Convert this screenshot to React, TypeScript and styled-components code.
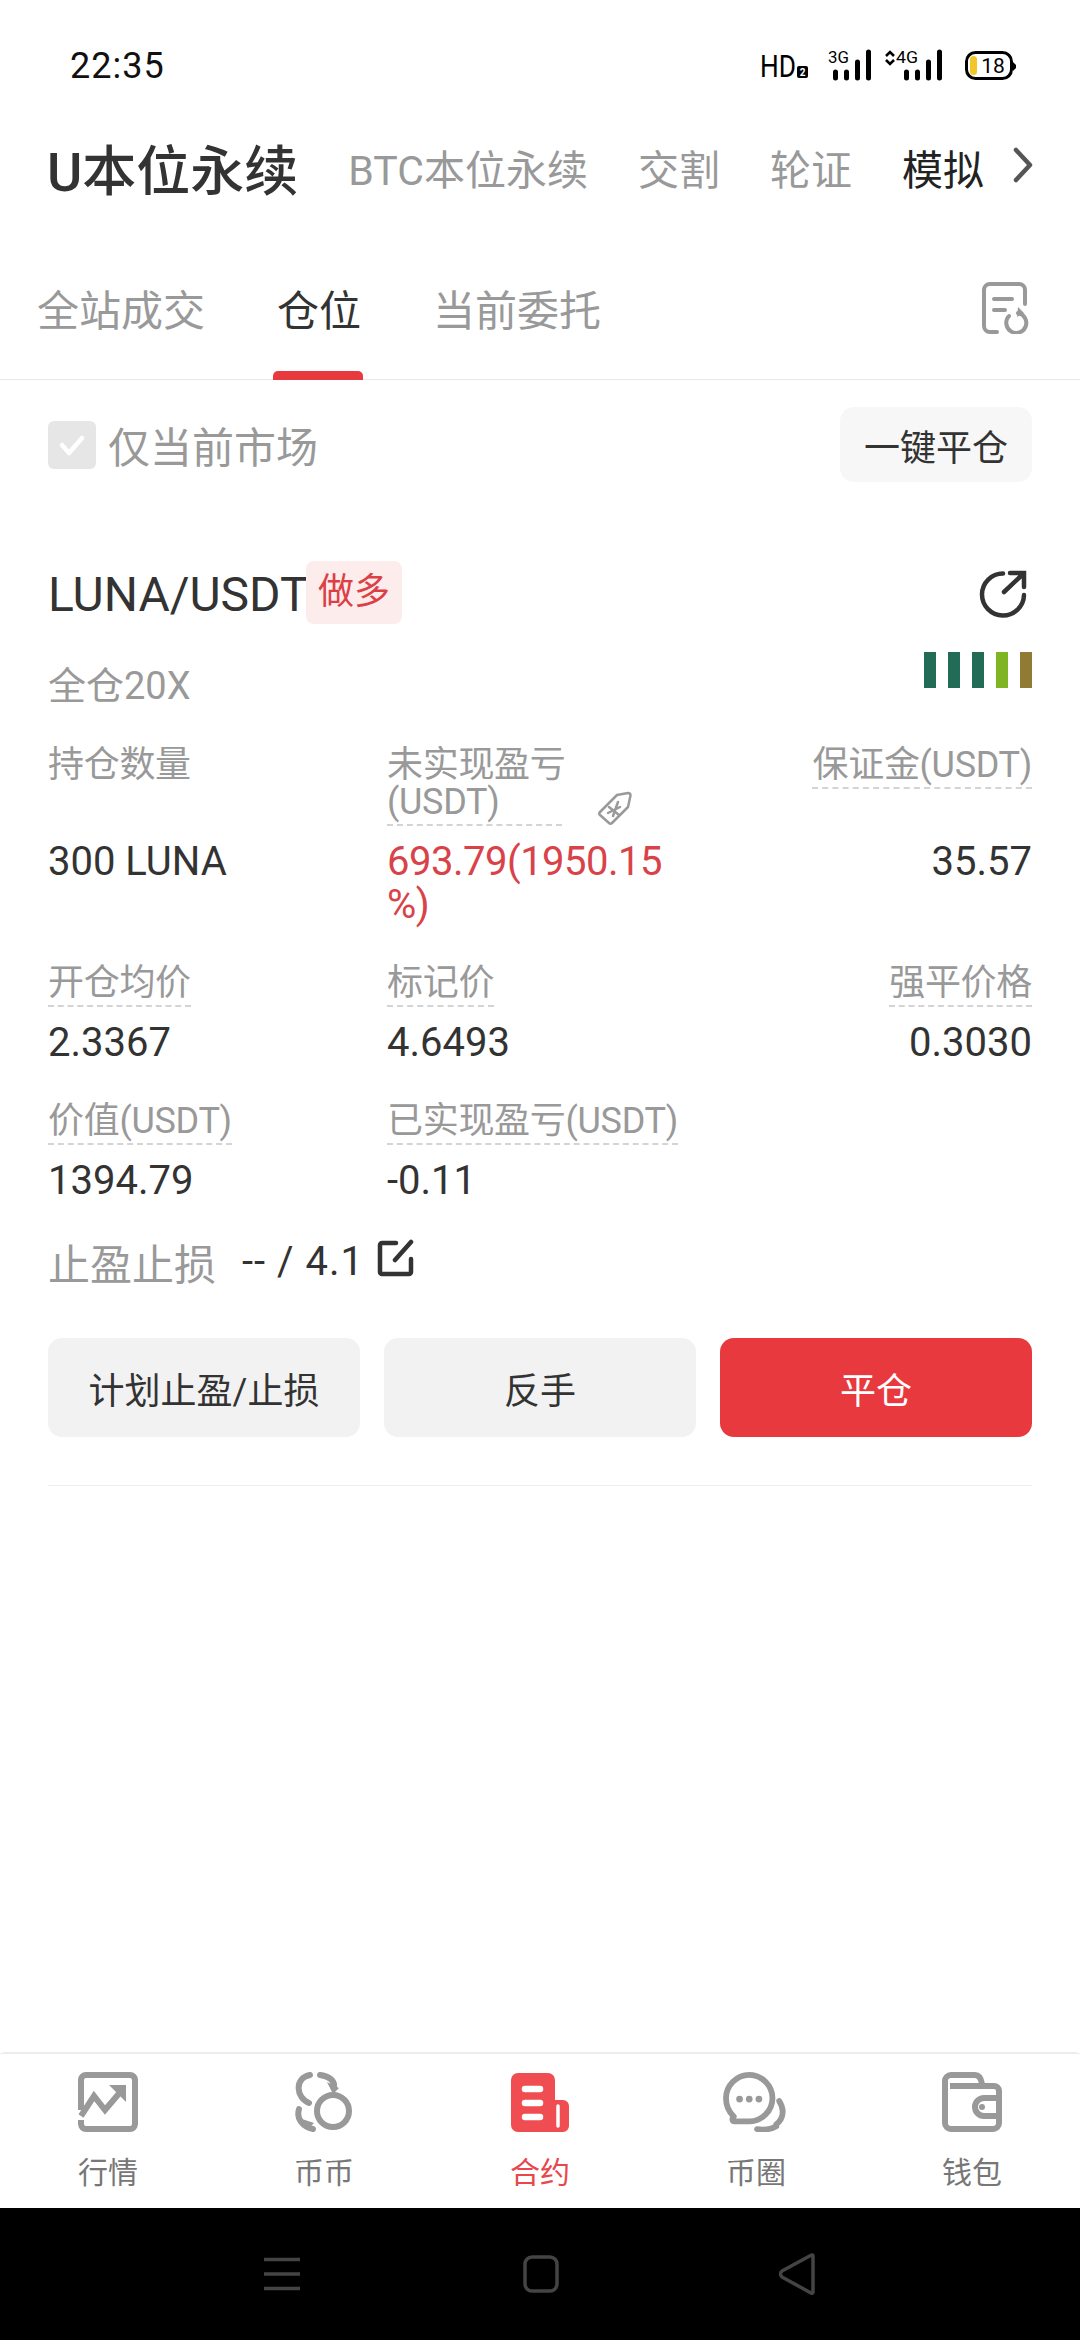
import { createGlobalStyle, styled } from 'styled-components';

const GRAY = '#999999';
const DARK = '#333333';
const RED = '#e8393f';

const TOP_TABS = [
  { label: 'BTC本位永续' },
  { label: '交割' },
  { label: '轮证' },
  { label: '模拟', dark: true }
];

const NAV_ITEMS = [
  { label: '行情', icon: <ChartIcon /> },
  { label: '币币', icon: <SwapIcon /> },
  { label: '合约', icon: <ContractIcon />, active: true },
  { label: '币圈', icon: <ChatIcon /> },
  { label: '钱包', icon: <WalletIcon /> }
];

export default function App() {
  return (
    <>
      <GlobalStyle />
      <StyledPage>
        <StatusBar />
        <StyledTopTabs>
          <StyledTopTitle>U本位永续</StyledTopTitle>
          {TOP_TABS.map(({ label, dark }) => (
            <StyledTopTab key={label} $dark={dark}>
              {label}
            </StyledTopTab>
          ))}
          <StyledChevron viewBox="0 0 20 36">
            <path d="M3 3l14 15L3 33" fill="none" stroke="#555" strokeWidth="4.5" strokeLinecap="round" strokeLinejoin="round" />
          </StyledChevron>
        </StyledTopTabs>
        <StyledSubTabs>
          <StyledSubTab>全站成交</StyledSubTab>
          <StyledSubTab $active>仓位</StyledSubTab>
          <StyledSubTab>当前委托</StyledSubTab>
          <StyledHistoryIcon viewBox="0 0 50 52">
            <path d="M16 50H9a6 6 0 0 1-6-6V8a6 6 0 0 1 6-6h29a6 6 0 0 1 6 6v14" fill="none" stroke={GRAY} strokeWidth="4" strokeLinecap="round" />
            <path d="M13 17h18M13 28h11" stroke={GRAY} strokeWidth="4" strokeLinecap="round" />
            <path d="M28 34a10 10 0 1 0 9-3" fill="none" stroke={GRAY} strokeWidth="4" strokeLinecap="round" />
            <path d="M37 25l6 6-7 4z" fill={GRAY} />
          </StyledHistoryIcon>
        </StyledSubTabs>
        <StyledFilterRow>
          <StyledCheckbox>
            <svg viewBox="0 0 48 48" width="48" height="48">
              <path d="M14 24l7 8 13-15" fill="none" stroke="#fff" strokeWidth="4.5" strokeLinecap="round" strokeLinejoin="round" />
            </svg>
          </StyledCheckbox>
          <StyledFilterText>仅当前市场</StyledFilterText>
          <StyledCloseAll>一键平仓</StyledCloseAll>
        </StyledFilterRow>
        <StyledCard>
          <StyledCardHead>
            <StyledSymbol>LUNA/USDT</StyledSymbol>
            <StyledSide>做多</StyledSide>
            <StyledShare viewBox="0 0 50 50">
              <path d="M25 4.500A21 21 0 1 0 46 26" fill="none" stroke={DARK} strokeWidth="4.500" strokeLinecap="round" />
              <path d="M26 23L45 5M32 4h14v14" fill="none" stroke={DARK} strokeWidth="4.500" strokeLinecap="round" />
            </StyledShare>
          </StyledCardHead>
          <StyledMarginRow>
            <StyledMarginMode>全仓20X</StyledMarginMode>
            <StyledBars>
              <StyledBar $color="#226b57" />
              <StyledBar $color="#226b57" />
              <StyledBar $color="#226b57" />
              <StyledBar $color="#7fb522" />
              <StyledBar $color="#917a33" />
            </StyledBars>
          </StyledMarginRow>
          <StyledGrid>
            <StyledLabelCell>
              <StyledPlainLabel>持仓数量</StyledPlainLabel>
            </StyledLabelCell>
            <StyledLabelCell>
              <StyledLabel $narrow>
                未实现盈亏
                <br />
                (USDT)
              </StyledLabel>
              <StyledTag viewBox="0 0 36 36">
                <path d="M3 22L20 5l11-2c1.500 0 2.500 1 2.500 2.500L31 17 15 33c-1 1-2 1-3 0l-9-8c-1-1-1-2 0-3z" fill="none" stroke="#9a9a9a" strokeWidth="2.500" strokeLinejoin="round" />
                <path d="M12 17l10 8M21 12l-5 14M11 23l12-6" stroke="#9a9a9a" strokeWidth="2.500" strokeLinecap="round" />
              </StyledTag>
            </StyledLabelCell>
            <StyledLabelCell $end>
              <StyledLabel>保证金(USDT)</StyledLabel>
            </StyledLabelCell>
            <StyledValue>300 LUNA</StyledValue>
            <StyledValue $red>
              693.79(1950.15
              <br />
              %)
            </StyledValue>
            <StyledValue $end>35.57</StyledValue>

            <StyledLabelCell $spaced>
              <StyledLabel>开仓均价</StyledLabel>
            </StyledLabelCell>
            <StyledLabelCell $spaced>
              <StyledLabel>标记价</StyledLabel>
            </StyledLabelCell>
            <StyledLabelCell $spaced $end>
              <StyledLabel>强平价格</StyledLabel>
            </StyledLabelCell>
            <StyledValue>2.3367</StyledValue>
            <StyledValue>4.6493</StyledValue>
            <StyledValue $end>0.3030</StyledValue>

            <StyledLabelCell $spaced>
              <StyledLabel>价值(USDT)</StyledLabel>
            </StyledLabelCell>
            <StyledLabelCell $spaced>
              <StyledLabel>已实现盈亏(USDT)</StyledLabel>
            </StyledLabelCell>
            <StyledLabelCell $spaced />
            <StyledValue>1394.79</StyledValue>
            <StyledValue>-0.11</StyledValue>
            <StyledValue />
          </StyledGrid>
          <StyledStopRow>
            <StyledStopLabel>止盈止损</StyledStopLabel>
            <StyledStopValue>-- / 4.1</StyledStopValue>
            <StyledEdit viewBox="0 0 38 38">
              <path d="M19 4H5a2 2 0 0 0-2 2v27a2 2 0 0 0 2 2h27a2 2 0 0 0 2-2V20" fill="none" stroke={DARK} strokeWidth="4.500" strokeLinecap="round" />
              <path d="M18 21L34 3" fill="none" stroke={DARK} strokeWidth="4.500" strokeLinecap="round" />
            </StyledEdit>
          </StyledStopRow>
          <StyledActions>
            <StyledAction>计划止盈/止损</StyledAction>
            <StyledAction>反手</StyledAction>
            <StyledAction $primary>平仓</StyledAction>
          </StyledActions>
        </StyledCard>
        <StyledNav>
          {NAV_ITEMS.map(({ label, icon, active }) => (
            <StyledNavItem key={label} $active={active}>
              {icon}
              <span>{label}</span>
            </StyledNavItem>
          ))}
        </StyledNav>
        <StyledSystemBar>
          <svg width="36" height="34" viewBox="0 0 36 34">
            <path d="M0 2.500h36M0 17h36M0 31.500h36" stroke="#444" strokeWidth="3.500" />
          </svg>
          <svg width="36" height="38" viewBox="0 0 36 38">
            <rect x="2" y="2" width="32" height="34" rx="7" fill="none" stroke="#444" strokeWidth="3.500" />
          </svg>
          <svg width="38" height="42" viewBox="0 0 38 42">
            <path d="M35 3c0-1-1-1.500-2-.7L4 18c-2 1.800-2 4 0 6l29 16c1 .7 2 .2 2-.8z" fill="none" stroke="#444" strokeWidth="3.500" strokeLinejoin="round" />
          </svg>
        </StyledSystemBar>
      </StyledPage>
    </>
  );
}

function StatusBar() {
  return (
    <StyledStatusBar>
      <StyledClock>22:35</StyledClock>
      <StyledIndicators viewBox="0 0 260 36" width="260" height="36">
        <text x="0" y="29" fontSize="32" fontFamily="Roboto" textLength="36" lengthAdjust="spacingAndGlyphs" fill="#000">HD</text>
        <rect x="37" y="18" width="11" height="12" rx="2" fill="#000" />
        <text x="42.500" y="28" fontSize="10" fontWeight="700" fontFamily="Roboto" textAnchor="middle" fill="#fff">2</text>
        <text x="68" y="15" fontSize="17" fontFamily="Roboto" textLength="21" lengthAdjust="spacingAndGlyphs" fill="#000">3G</text>
        <path d="M75.500 24v6M86.500 24v6M97.500 14v16M108.500 4v26" stroke="#000" strokeWidth="5" strokeLinecap="round" />
        <path d="M126 8l4-4 4 4M126 12l4 4 4-4" fill="none" stroke="#000" strokeWidth="2.500" />
        <text x="136" y="15" fontSize="17" fontFamily="Roboto" textLength="22" lengthAdjust="spacingAndGlyphs" fill="#000">4G</text>
        <path d="M146.500 24v6M157.500 24v6M168.500 14v16M179.500 4v26" stroke="#000" strokeWidth="5" strokeLinecap="round" />
        <rect x="206.500" y="4.500" width="45" height="26" rx="9" fill="#fff" stroke="#000" strokeWidth="3" />
        <rect x="210" y="8" width="7" height="19" rx="3.500" fill="#f2c52d" />
        <path d="M253 14l3 3v3l-3 3z" fill="#000" />
        <text x="233" y="25" fontSize="21" fontFamily="Roboto" textAnchor="middle" fill="#000">18</text>
      </StyledIndicators>
    </StyledStatusBar>
  );
}

function ChartIcon() {
  return (
    <svg width="60" height="60" viewBox="0 0 60 60">
      <path d="M3 38V8a5 5 0 0 1 5-5h44a5 5 0 0 1 5 5v44a5 5 0 0 1-5 5H8a5 5 0 0 1-5-5v-4" fill="none" stroke={GRAY} strokeWidth="6" />
      <path d="M3 44l13-20 11 14 17-20" fill="none" stroke={GRAY} strokeWidth="6" />
      <path d="M31 13h17v17z" fill={GRAY} />
    </svg>
  );
}

function SwapIcon() {
  return (
    <svg width="60" height="60" viewBox="0 0 60 60">
      <path d="M15 31C2 26 0 6 16 3M26 3c8 1 15 5 14 12" fill="none" stroke={GRAY} strokeWidth="6" strokeLinecap="round" />
      <circle cx="39" cy="39" r="16" fill="none" stroke={GRAY} strokeWidth="6" />
      <path d="M5 37c-3 10 4 18 14 20" fill="none" stroke={GRAY} strokeWidth="6" strokeLinecap="round" />
      <path d="M33 10l12 6-6 6zM8 47l12 4-7 7z" fill={GRAY} />
    </svg>
  );
}

function ContractIcon() {
  return (
    <svg width="60" height="60" viewBox="0 0 60 60">
      <path d="M8 1h30a7 7 0 0 1 7 7v20h8a6 6 0 0 1 6 6v20a6 6 0 0 1-6 6H8a7 7 0 0 1-7-7V8a7 7 0 0 1 7-7z" fill="#f04d52" />
      <path d="M15 17h15M15 31h15M15 45h15" stroke="#fff" strokeWidth="6.500" strokeLinecap="round" />
      <path d="M48 34v20" stroke="#fff" strokeWidth="3.500" strokeLinecap="round" />
    </svg>
  );
}

function ChatIcon() {
  return (
    <svg width="68" height="62" viewBox="0 0 68 62">
      <path d="M27 3c13 0 24 11 24 24S40 51 27 51H12c-3 0-3-3-1-5C6 41 3 35 3 27 3 14 14 3 27 3z" fill="none" stroke={GRAY} strokeWidth="6" strokeLinejoin="round" />
      <circle cx="17" cy="28" r="3.500" fill={GRAY} />
      <circle cx="27" cy="28" r="3.500" fill={GRAY} />
      <circle cx="37" cy="28" r="3.500" fill={GRAY} />
      <path d="M58 30c6 9 4 19-3 24M35 59c7 1 15 0 20-3" fill="none" stroke={GRAY} strokeWidth="6" strokeLinecap="round" />
    </svg>
  );
}

function WalletIcon() {
  return (
    <svg width="60" height="60" viewBox="0 0 60 60">
      <path d="M3 18V9a6 6 0 0 1 6-6h24c4 0 6 3 7 9" fill="none" stroke={GRAY} strokeWidth="6" />
      <path d="M8 14h44a5 5 0 0 1 5 5v32a6 6 0 0 1-6 6H9a6 6 0 0 1-6-6V18" fill="none" stroke={GRAY} strokeWidth="6" />
      <path d="M57 26H42a9 9 0 0 0 0 18h15" fill="none" stroke={GRAY} strokeWidth="6" />
      <circle cx="40" cy="35" r="3" fill={GRAY} />
    </svg>
  );
}

const GlobalStyle = createGlobalStyle`
  html, body {
    margin: 0;
    padding: 0;
    background: #fff;
    font-family: Roboto, "Noto Sans CJK SC", sans-serif;
  }
  * {
    box-sizing: border-box;
  }
`;

const StyledPage = styled.div`
  width: 1080px;
  height: 2340px;
  display: flex;
  flex-direction: column;
  background: #fff;
  overflow: hidden;
`;

const StyledStatusBar = styled.div`
  height: 127px;
  flex: none;
  display: flex;
  justify-content: space-between;
  align-items: center;
  padding: 4px 60px 0 70px;
`;

const StyledClock = styled.span`
  font-size: 36px;
  color: #111;
  letter-spacing: 1px;
`;

const StyledIndicators = styled.svg`
  display: block;
`;

const StyledTopTabs = styled.div`
  height: 80px;
  flex: none;
  display: flex;
  align-items: center;
  gap: 50px;
  padding-left: 47px;
`;

const StyledTopTitle = styled.div`
  font-size: 54px;
  font-weight: 500;
  color: ${DARK};
`;

const StyledTopTab = styled.div<{ $dark?: boolean }>`
  font-size: 41px;
  color: ${(props) => (props.$dark ? '#222' : GRAY)};
`;

const StyledChevron = styled.svg`
  width: 20px;
  height: 36px;
  margin-left: -21px;
  margin-top: -4px;
`;

const StyledSubTabs = styled.div`
  height: 173px;
  flex: none;
  display: flex;
  align-items: flex-end;
  gap: 72px;
  padding-left: 37px;
  border-bottom: 1px solid #e8e8e8;
  position: relative;
`;

const StyledSubTab = styled.div<{ $active?: boolean }>`
  position: relative;
  height: 96px;
  font-size: 42px;
  line-height: 58px;
  color: ${(props) => (props.$active ? DARK : GRAY)};

  &::after {
    content: '';
    display: ${(props) => (props.$active ? 'block' : 'none')};
    position: absolute;
    left: -4px;
    right: -2px;
    bottom: -1px;
    height: 9px;
    border-radius: 5px 5px 0 0;
    background: ${RED};
  }
`;

const StyledHistoryIcon = styled.svg`
  width: 50px;
  height: 52px;
  margin: 0 49px 45px auto;
`;

const StyledFilterRow = styled.div`
  flex: none;
  display: flex;
  align-items: center;
  padding: 27px 48px 0;
`;

const StyledCheckbox = styled.div`
  width: 48px;
  height: 48px;
  border-radius: 6px;
  background: #e6e6e6;
  margin-right: 12px;
`;

const StyledFilterText = styled.div`
  font-size: 42px;
  color: ${GRAY};
`;

const StyledCloseAll = styled.button`
  margin-left: auto;
  width: 192px;
  height: 75px;
  border: none;
  border-radius: 14px;
  background: #f7f7f7;
  color: ${DARK};
  font: inherit;
  font-size: 36px;
  padding: 0;
`;

const StyledCard = styled.div`
  flex: 1;
  min-height: 0;
  padding: 0 48px;
`;

const StyledCardHead = styled.div`
  display: flex;
  align-items: center;
  height: 63px;
  margin-top: 79px;
`;

const StyledSymbol = styled.div`
  font-size: 48px;
  color: ${DARK};
  width: 258px;
  padding-top: 4px;
  white-space: nowrap;
`;

const StyledSide = styled.div`
  width: 96px;
  height: 63px;
  line-height: 63px;
  text-align: center;
  font-size: 36px;
  color: #dc4046;
  background: #fdecec;
  border-radius: 8px;
`;

const StyledShare = styled.svg`
  width: 50px;
  height: 50px;
  margin: 2px 4px 0 auto;
`;

const StyledMarginRow = styled.div`
  display: flex;
  justify-content: space-between;
  align-items: flex-start;
  height: 123px;
  padding-top: 28px;
`;

const StyledMarginMode = styled.div`
  font-size: 38px;
  line-height: 46px;
  margin-top: 11px;
  color: ${GRAY};
`;

const StyledBars = styled.div`
  display: flex;
  gap: 12px;
`;

const StyledBar = styled.div<{ $color: string }>`
  width: 12px;
  height: 36px;
  background: ${(props) => props.$color};
`;

const StyledGrid = styled.div`
  display: grid;
  grid-template-columns: 339px 280px 1fr;
  align-items: start;
`;

const StyledLabelCell = styled.div<{ $end?: boolean; $spaced?: boolean }>`
  display: flex;
  align-items: flex-end;
  justify-content: ${(props) => (props.$end ? 'flex-end' : 'flex-start')};
  margin-top: ${(props) => (props.$spaced ? '39px' : '0')};
`;

const StyledPlainLabel = styled.div`
  font-size: 36px;
  line-height: 37px;
  color: ${GRAY};
  white-space: nowrap;
  letter-spacing: -0.3px;
`;

const StyledLabel = styled(StyledPlainLabel)<{ $narrow?: boolean }>`
  width: ${(props) => (props.$narrow ? '175px' : 'auto')};
  padding-bottom: 3px;
  border-bottom: 2px dashed #d4d4d4;
`;

const StyledTag = styled.svg`
  width: 36px;
  height: 36px;
  margin-left: 35px;
`;

const StyledValue = styled.div<{ $end?: boolean; $red?: boolean }>`
  margin-top: 14px;
  font-size: 40px;
  line-height: 43px;
  letter-spacing: ${(props) => (props.$red ? '-0.5px' : '0')};
  color: ${(props) => (props.$red ? '#d8434a' : DARK)};
  text-align: ${(props) => (props.$end ? 'right' : 'left')};
  white-space: nowrap;
`;

const StyledStopRow = styled.div`
  display: flex;
  align-items: center;
  height: 60px;
  margin-top: 29px;
`;

const StyledStopLabel = styled.div`
  font-size: 42px;
  color: ${GRAY};
`;

const StyledStopValue = styled.div`
  font-size: 40px;
  letter-spacing: 1px;
  color: ${DARK};
  margin-left: 26px;
`;

const StyledEdit = styled.svg`
  width: 38px;
  height: 38px;
  margin: -6px 0 0 13px;
`;

const StyledActions = styled.div`
  display: grid;
  grid-template-columns: repeat(3, 1fr);
  gap: 24px;
  margin-top: 47px;
  padding-bottom: 48px;
  border-bottom: 1px solid #eeeeee;
`;

const StyledAction = styled.button<{ $primary?: boolean }>`
  height: 99px;
  border: none;
  border-radius: 14px;
  padding: 0;
  font: inherit;
  font-size: 36px;
  color: ${(props) => (props.$primary ? '#fff' : DARK)};
  background: ${(props) => (props.$primary ? RED : '#f2f2f2')};
`;

const StyledNav = styled.div`
  flex: none;
  height: 155px;
  display: grid;
  grid-template-columns: repeat(5, 1fr);
  border-top: 1px solid #ececec;
  box-shadow: 0 -4px 0 -3px #ececec;
  padding-top: 18px;
`;

const StyledNavItem = styled.div<{ $active?: boolean }>`
  display: flex;
  flex-direction: column;
  align-items: center;
  font-size: 30px;
  line-height: 40px;
  color: ${(props) => (props.$active ? '#e8474c' : '#777')};

  svg {
    height: 60px;
    margin-bottom: 21px;
  }
`;

const StyledSystemBar = styled.div`
  flex: none;
  height: 132px;
  background: #000;
  display: grid;
  grid-template-columns: 259px 255px 38px;
  align-items: center;
  padding-left: 264px;
`;
